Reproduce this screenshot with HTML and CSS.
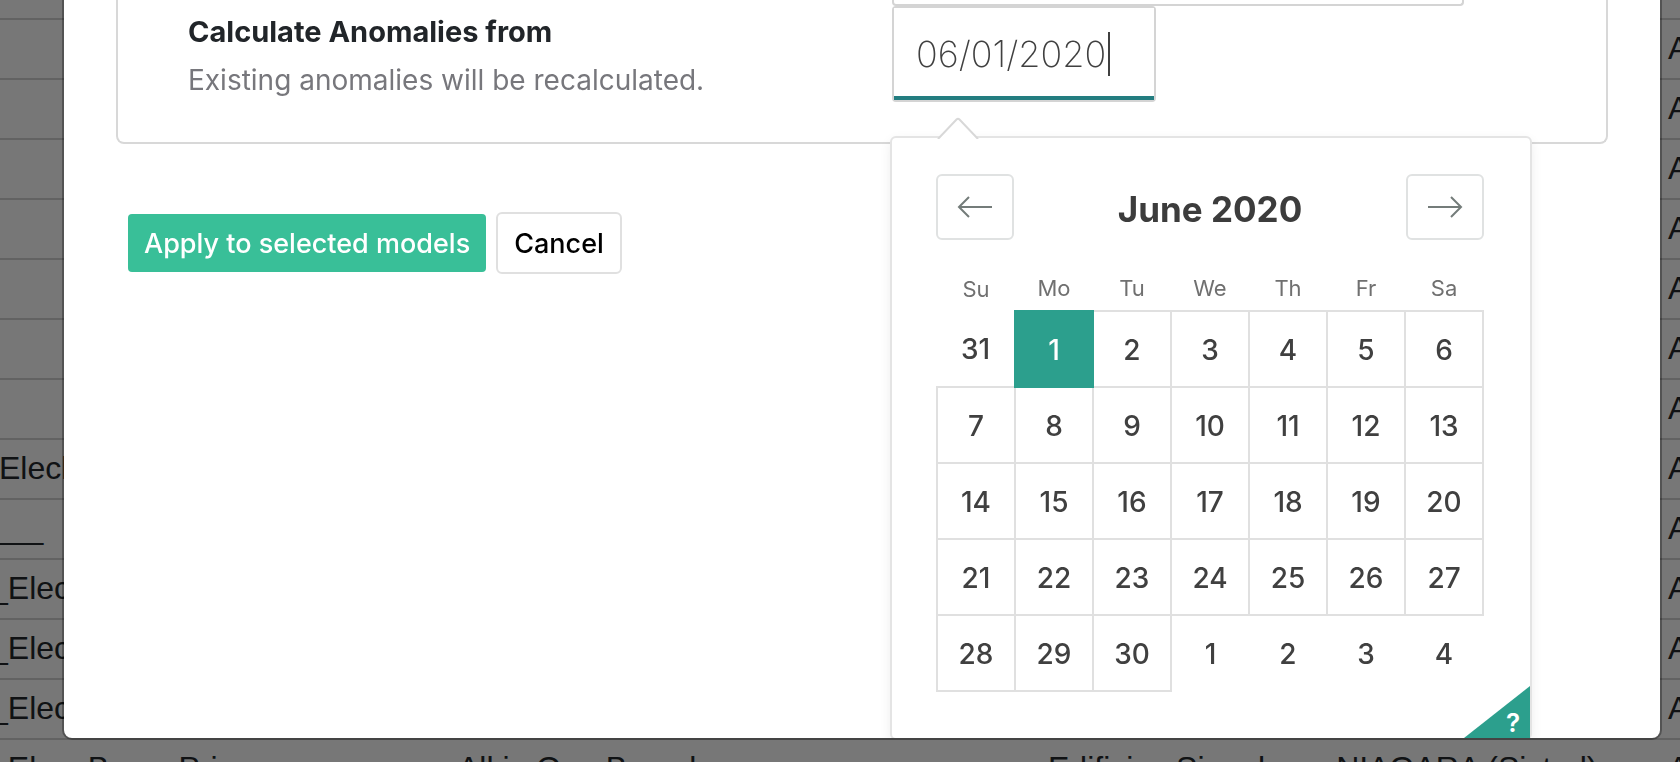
FILE: index.html
```
<!DOCTYPE html>
<html lang="en">
<head>
<meta charset="UTF-8">
<meta name="viewport" content="width=device-width, initial-scale=1.0">
<title>Anomaly Models</title>
<link rel="stylesheet" href="styles.css">
</head>
<body>

<table class="models">
    <tbody>
        <tr><td></td><td></td><td></td><td>A</td></tr>
        <tr><td></td><td></td><td></td><td>A</td></tr>
        <tr><td></td><td></td><td></td><td>A</td></tr>
        <tr><td></td><td></td><td></td><td>A</td></tr>
        <tr><td></td><td></td><td></td><td>A</td></tr>
        <tr><td></td><td></td><td></td><td>A</td></tr>
        <tr><td></td><td></td><td></td><td>A</td></tr>
        <tr><td class="flush">Elecl</td><td></td><td></td><td>A</td></tr>
        <tr><td>___</td><td></td><td></td><td>A</td></tr>
        <tr><td>_Elec</td><td></td><td></td><td>A</td></tr>
        <tr><td>_Elec</td><td></td><td></td><td>A</td></tr>
        <tr><td>_Elec</td><td></td><td></td><td>A</td></tr>
        <tr><td>_Elec_Banc_Pri</td><td>All in One Barcelona</td><td>Edificios Singulares NIAGARA (Sistrol)</td><td>A</td></tr>
    </tbody>
</table>

<div class="overlay">
    <div class="modal" role="dialog" aria-label="Edit models">
        <div class="settings">
            <div class="setting-text">
                <label class="setting-title" for="fromDate">Calculate Anomalies from</label>
                <p class="setting-help">Existing anomalies will be recalculated.</p>
            </div>
            <div class="setting-control">
                <div class="previous-field"></div>
                <div class="date-field">
                    <input type="text" id="fromDate" value="06/01/2020">
                    <div class="picker">
                        <svg class="picker-fang" width="44" height="22" viewBox="0 0 44 22">
                            <path d="M2 22 L20.5 2.5 Q22 1 23.5 2.5 L42 22" fill="#fff" stroke="#d8d8d8" stroke-width="2"/>
                        </svg>
                        <div class="picker-head">
                            <button type="button" class="nav" aria-label="Previous month">
                                <svg width="36" height="24" viewBox="0 0 36 24"><path d="M35 12H2M12 2L2 12l10 10"/></svg>
                            </button>
                            <strong class="month">June 2020</strong>
                            <button type="button" class="nav" aria-label="Next month">
                                <svg width="36" height="24" viewBox="0 0 36 24"><path d="M1 12h33M24 2l10 10-10 10"/></svg>
                            </button>
                        </div>
                        <table class="days">
                            <thead>
                                <tr><th>Su</th><th>Mo</th><th>Tu</th><th>We</th><th>Th</th><th>Fr</th><th>Sa</th></tr>
                            </thead>
                            <tbody>
                                <tr><td class="outside">31</td><td class="selected">1</td><td>2</td><td>3</td><td>4</td><td>5</td><td>6</td></tr>
                                <tr><td>7</td><td>8</td><td>9</td><td>10</td><td>11</td><td>12</td><td>13</td></tr>
                                <tr><td>14</td><td>15</td><td>16</td><td>17</td><td>18</td><td>19</td><td>20</td></tr>
                                <tr><td>21</td><td>22</td><td>23</td><td>24</td><td>25</td><td>26</td><td>27</td></tr>
                                <tr><td>28</td><td>29</td><td>30</td><td class="outside">1</td><td class="outside">2</td><td class="outside">3</td><td class="outside">4</td></tr>
                            </tbody>
                        </table>
                        <button type="button" class="shortcuts" aria-label="Keyboard shortcuts">?</button>
                    </div>
                </div>
            </div>
        </div>
        <div class="actions">
            <button type="button" class="btn btn-apply">Apply to selected models</button>
            <button type="button" class="btn btn-cancel">Cancel</button>
        </div>
    </div>
</div>

</body>
</html>
```
FILE: styles.css
```
* {
    box-sizing: border-box;
}
body {
    margin: 0;
    height: 100vh;
    overflow: hidden;
    background-color: #eee;
    font-family: Inter, "Liberation Sans", sans-serif;
    font-size: 28px;
}
button, input {
    font-family: inherit;
}

/* models table behind the dialog */
.models {
    width: 100%;
    margin-top: 18px;
    border-collapse: separate;
    border-spacing: 0;
    table-layout: fixed;
    font-family: "Liberation Sans", Arial, sans-serif;
    font-size: 32px;
    line-height: 36px;
    color: #212529;
}
.models td {
    height: 60px;
    padding: 0 0 2px 10px;
    border-top: 2px solid #c4c4c4;
    white-space: nowrap;
}
.models td:nth-child(1) {
    width: 448px;
    padding-left: 0;
    text-indent: -10px;
}
.models td.flush {
    text-indent: -1px;
}
.models td:nth-child(2) {
    width: 590px;
}
.models td:nth-child(4) {
    width: 22px;
}

.overlay {
    position: fixed;
    inset: 0;
    display: flex;
    padding: 0 20px 24px 64px;
    background-color: rgba(0, 0, 0, 0.5);
}
.modal {
    flex: 1;
    overflow: hidden;
    background-color: #fff;
    border-radius: 0 0 8px 8px;
    box-shadow: 0 0 0 2px rgba(0, 0, 0, 0.3);
}

.settings {
    display: grid;
    grid-template-columns: 1fr 1fr;
    height: 144px;
    margin: 0 52px;
    padding: 0 10px 0 70px;
    border: 2px solid #d8d8d8;
    border-top: 0;
    border-radius: 0 0 8px 8px;
}
.setting-text {
    padding-top: 8px;
    line-height: 48px;
}
.setting-title {
    display: block;
    font-size: 29px;
    font-weight: 700;
    color: #212529;
}
.setting-help {
    margin: 0;
    color: #77777c;
}
.previous-field {
    width: 572px;
    height: 6px;
    border: 2px solid #d4d4d4;
    border-top: 0;
    border-radius: 0 0 4px 4px;
}
.date-field {
    position: relative;
    width: 264px;
    border: 2px solid #d4d4d4;
    border-radius: 4px;
}
.date-field input {
    display: block;
    width: 100%;
    height: 92px;
    padding: 4px 22px 0;
    border: 0;
    border-bottom: 4px solid #237d80;
    outline: 0;
    font-size: 36px;
    font-weight: 250;
    color: #404040;
}
/* text cursor of the focused field */
.date-field::after {
    content: "";
    position: absolute;
    top: 24px;
    left: 214px;
    width: 2px;
    height: 44px;
    background-color: #404040;
}

/* date picker */
.picker {
    position: absolute;
    top: 128px;
    left: -4px;
    width: 642px;
    height: 604px;
    padding: 36px 46px 36px 44px;
    background-color: #fff;
    border: 2px solid #e4e4e4;
    border-radius: 6px;
    box-shadow: 0 4px 12px rgba(0, 0, 0, 0.07);
}
.picker-fang {
    position: absolute;
    top: -21px;
    left: 44px;
}
.picker-head {
    display: flex;
    align-items: center;
    justify-content: space-between;
}
.nav {
    display: flex;
    align-items: center;
    justify-content: center;
    width: 78px;
    height: 66px;
    padding: 0;
    background-color: #fff;
    border: 2px solid #e0e2e2;
    border-radius: 6px;
}
.nav path {
    fill: none;
    stroke: #747c7a;
    stroke-width: 2;
}
.month {
    padding-top: 4px;
    font-size: 35px;
    color: #3c3c3c;
}
.days {
    width: 100%;
    margin-top: 26px;
    border-collapse: collapse;
    table-layout: fixed;
    font-weight: 450;
    color: #404040;
    text-align: center;
}
.days th {
    height: 45px;
    padding: 0;
    font-size: 22px;
    font-weight: 400;
    color: #707070;
}
.days td {
    height: 76px;
    padding: 2px 0 0;
    border: 2px solid #e0e0e0;
}
.days td.outside {
    padding: 0;
    border: 0;
}
.days td.selected {
    background-color: #2c9f8d;
    border: 2px double #2c9f8d;
    color: #fff;
}
.shortcuts {
    position: absolute;
    right: 0;
    bottom: 0;
    width: 66px;
    height: 52px;
    padding: 20px 0 0 32px;
    border: 0;
    background-color: #2c9f8d;
    clip-path: polygon(100% 0, 100% 100%, 0 100%);
    font-size: 26px;
    font-weight: 600;
    color: #fff;
}

.actions {
    display: flex;
    align-items: center;
    gap: 10px;
    padding: 68px 64px;
}
.btn {
    padding: 2px 16px 0;
    border: 0;
    border-radius: 4px;
    font-size: 27px;
    font-weight: 450;
    line-height: 56px;
}
.btn-apply {
    background-color: #39bf98;
    color: #fff;
}
.btn-cancel {
    background-color: #fff;
    border: 2px solid #e0e0e0;
    border-radius: 6px;
    color: #000;
}
```
